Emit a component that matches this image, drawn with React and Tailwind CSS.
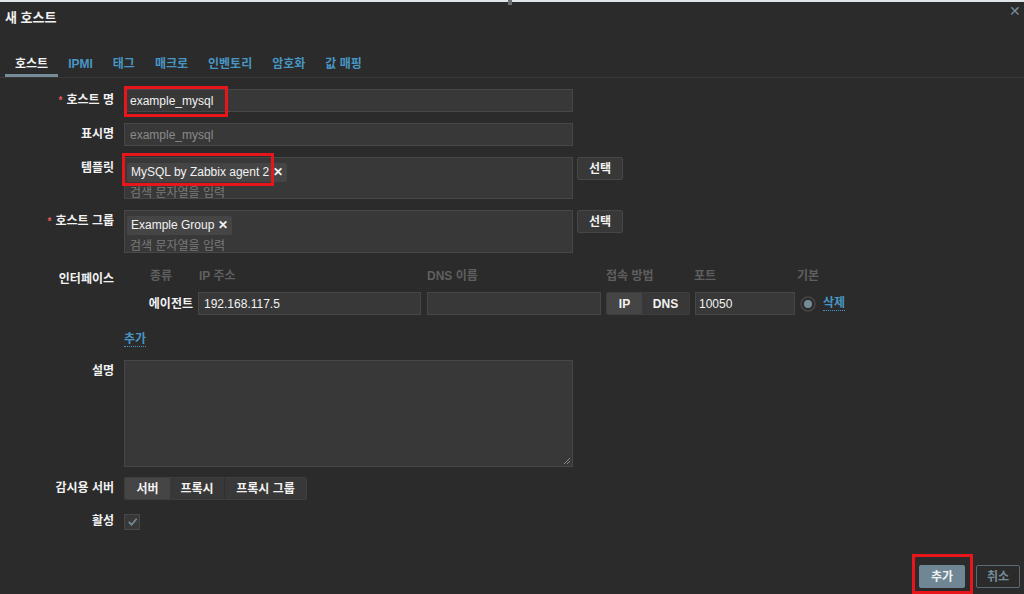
import React from 'react';

const font = { fontFamily: '"Liberation Sans", "Noto Sans CJK KR", sans-serif' };

function Label({ children, required }) {
  return (
    <div className="w-[114px] shrink-0 text-right text-[12px] font-bold text-[#f2f2f2] leading-[23px]">
      {required && <span className="text-[#e45959] mr-[4px] align-top text-[10px]">*</span>}
      {children}
    </div>
  );
}

function Tag({ children }) {
  return (
    <span className="inline-flex items-center h-[19px] px-[4px] bg-[#454545] rounded-[2px] text-[12px] text-[#f2f2f2] gap-[4px]">
      {children}
      <span className="text-[12px] font-bold">✕</span>
    </span>
  );
}

function RedBox({ className }) {
  return <div className={'absolute border-[3px] border-[#e8151b] pointer-events-none ' + className} />;
}

export default function App() {
  const tabs = ['호스트', 'IPMI', '태그', '매크로', '인벤토리', '암호화', '값 매핑'];
  return (
    <div style={font} className="w-[1024px] h-[594px] bg-[#2b2b2b] relative overflow-hidden text-[#f2f2f2]">
      <div className="h-[2px] bg-[#dfe4e6]" />
      <div className="absolute left-[508px] top-0 w-[4px] h-[5px] bg-[#6a6f72]" />
      <div className="h-[32px] flex items-center px-[5px] text-[13px] font-bold text-[#f2f2f2]">새 호스트</div>
      <button className="absolute right-[3px] top-[4px] text-[#768d99] text-[14px] leading-none">✕</button>

      {/* tabs */}
      <div className="mt-[16px] flex items-end h-[28px] border-b border-[#383838] px-[5px]">
        {tabs.map((t, i) => (
          <div
            key={t}
            className={
              'h-full flex items-center whitespace-nowrap px-[10px] text-[12px] font-bold ' +
              (i === 0 ? 'text-[#f2f2f2] border-b-[3px] border-[#768d99] pt-[3px]' : 'text-[#4796c4]')
            }
          >
            {t}
          </div>
        ))}
      </div>

      {/* form */}
      <div className="mt-[11px] flex flex-col">
        <div className="flex gap-[10px]">
          <Label required>호스트 명</Label>
          <div className="w-[449px] h-[23px] bg-[#383838] border border-[#474747] px-[5px] flex items-center text-[12px] text-[#f2f2f2]">
            example_mysql
          </div>
        </div>

        <div className="flex gap-[10px] mt-[11px]">
          <Label>표시명</Label>
          <div className="w-[449px] h-[23px] bg-[#383838] border border-[#474747] px-[5px] flex items-center text-[12px] text-[#8a8a8a]">
            example_mysql
          </div>
        </div>

        <div className="flex gap-[10px] mt-[11px]">
          <Label>템플릿</Label>
          <div className="w-[449px] h-[42px] bg-[#383838] border border-[#474747] px-[2px] pt-[1px] flex flex-col">
            <div><Tag>MySQL by Zabbix agent 2</Tag></div>
            <div className="px-[3px] text-[12px] text-[#7a7a7a] leading-[20px]">검색 문자열을 입력</div>
          </div>
          <button className="ml-[-6px] h-[23px] w-[46px] bg-[#383838] border border-[#474747] rounded-[2px] text-[12px] font-bold text-[#f2f2f2]">선택</button>
        </div>

        <div className="flex gap-[10px] mt-[11px]">
          <Label required>호스트 그룹</Label>
          <div className="w-[449px] h-[43px] bg-[#383838] border border-[#474747] px-[2px] pt-[1px] flex flex-col">
            <div><Tag>Example Group</Tag></div>
            <div className="px-[3px] text-[12px] text-[#7a7a7a] leading-[20px]">검색 문자열을 입력</div>
          </div>
          <button className="ml-[-6px] h-[23px] w-[46px] bg-[#383838] border border-[#474747] rounded-[2px] text-[12px] font-bold text-[#f2f2f2]">선택</button>
        </div>

        {/* interfaces */}
        <div className="flex gap-[10px] mt-[15px]">
          <Label>인터페이스</Label>
          <div className="flex flex-col">
            <div className="h-[16px] flex items-center text-[12px] font-bold text-[#5f5f5f] relative w-[720px]">
              <span className="absolute left-[26px]">종류</span>
              <span className="absolute left-[75px]">IP 주소</span>
              <span className="absolute left-[303px]">DNS 이름</span>
              <span className="absolute left-[482px]">접속 방법</span>
              <span className="absolute left-[570px]">포트</span>
              <span className="absolute left-[673px]">기본</span>
            </div>
            <div className="flex items-center mt-[8px] h-[23px]">
              <div className="w-[74px] text-right pr-[5px] text-[12px] font-bold text-[#f2f2f2]">에이전트</div>
              <div className="w-[223px] h-[23px] bg-[#383838] border border-[#474747] px-[5px] flex items-center text-[12px]">192.168.117.5</div>
              <div className="ml-[6px] w-[174px] h-[23px] bg-[#383838] border border-[#474747]" />
              <div className="ml-[5px] flex h-[23px] border border-[#3e3e3e] rounded-[2px] overflow-hidden text-[12px] font-bold">
                <div className="w-[35px] bg-[#454545] flex items-center justify-center">IP</div>
                <div className="w-[47px] bg-[#383838] flex items-center justify-center">DNS</div>
              </div>
              <div className="ml-[5px] w-[100px] h-[23px] bg-[#383838] border border-[#474747] px-[3px] flex items-center text-[12px]">10050</div>
              <div className="ml-[5px] w-[16px] h-[16px] rounded-full border-[2px] border-[#3f3f3f] flex items-center justify-center">
                <div className="w-[8px] h-[8px] rounded-full bg-[#768d99]" />
              </div>
              <span className="ml-[7px] text-[12px] font-bold text-[#4796c4] border-b border-dotted border-[#4796c4] leading-[14px]">삭제</span>
            </div>
          </div>
        </div>

        <div className="flex gap-[10px] mt-[17px]">
          <div className="w-[114px]" />
          <span className="text-[12px] font-bold text-[#4796c4] border-b border-dotted border-[#4796c4] leading-[14px]">추가</span>
        </div>

        <div className="flex gap-[10px] mt-[13px]">
          <Label>설명</Label>
          <div className="w-[449px] h-[107px] bg-[#383838] border border-[#474747] relative">
            <svg className="absolute right-[1px] bottom-[1px]" width="8" height="8" viewBox="0 0 8 8">
              <path d="M7 1L1 7M7 4L4 7" stroke="#8a8a8a" strokeWidth="1" />
            </svg>
          </div>
        </div>

        <div className="flex gap-[10px] mt-[10px]">
          <Label>감시용 서버</Label>
          <div className="flex h-[23px] border border-[#3e3e3e] rounded-[2px] overflow-hidden text-[12px] font-bold">
            <div className="w-[45px] bg-[#454545] flex items-center justify-center">서버</div>
            <div className="w-[55px] bg-[#383838] border-r border-[#2f2f2f] flex items-center justify-center">프록시</div>
            <div className="w-[81px] bg-[#383838] flex items-center justify-center">프록시 그룹</div>
          </div>
        </div>

        <div className="flex gap-[10px] mt-[10px] items-center">
          <Label>활성</Label>
          <div className="w-[16px] h-[16px] bg-[#383838] border border-[#474747] flex items-center justify-center">
            <svg width="11" height="11" viewBox="0 0 12 12">
              <path d="M2 6.5L5 9.5L10.5 3" stroke="#768d99" strokeWidth="1.8" fill="none" />
            </svg>
          </div>
        </div>
      </div>

      {/* footer buttons */}
      <div className="absolute right-[4px] bottom-[6px] flex gap-[11px]">
        <button className="w-[46px] h-[23px] bg-[#6f8695] text-[12px] font-bold text-[#f2f2f2] rounded-[2px]">추가</button>
        <button className="w-[44px] h-[23px] border border-[#5a6a74] text-[12px] font-bold text-[#768d99] rounded-[2px]">취소</button>
      </div>

      <RedBox className="left-[124px] top-[86px] w-[104px] h-[31px]" />
      <RedBox className="left-[122px] top-[153px] w-[152px] h-[33px]" />
      <RedBox className="left-[912px] top-[554px] w-[61px] h-[40px]" />
    </div>
  );
}
